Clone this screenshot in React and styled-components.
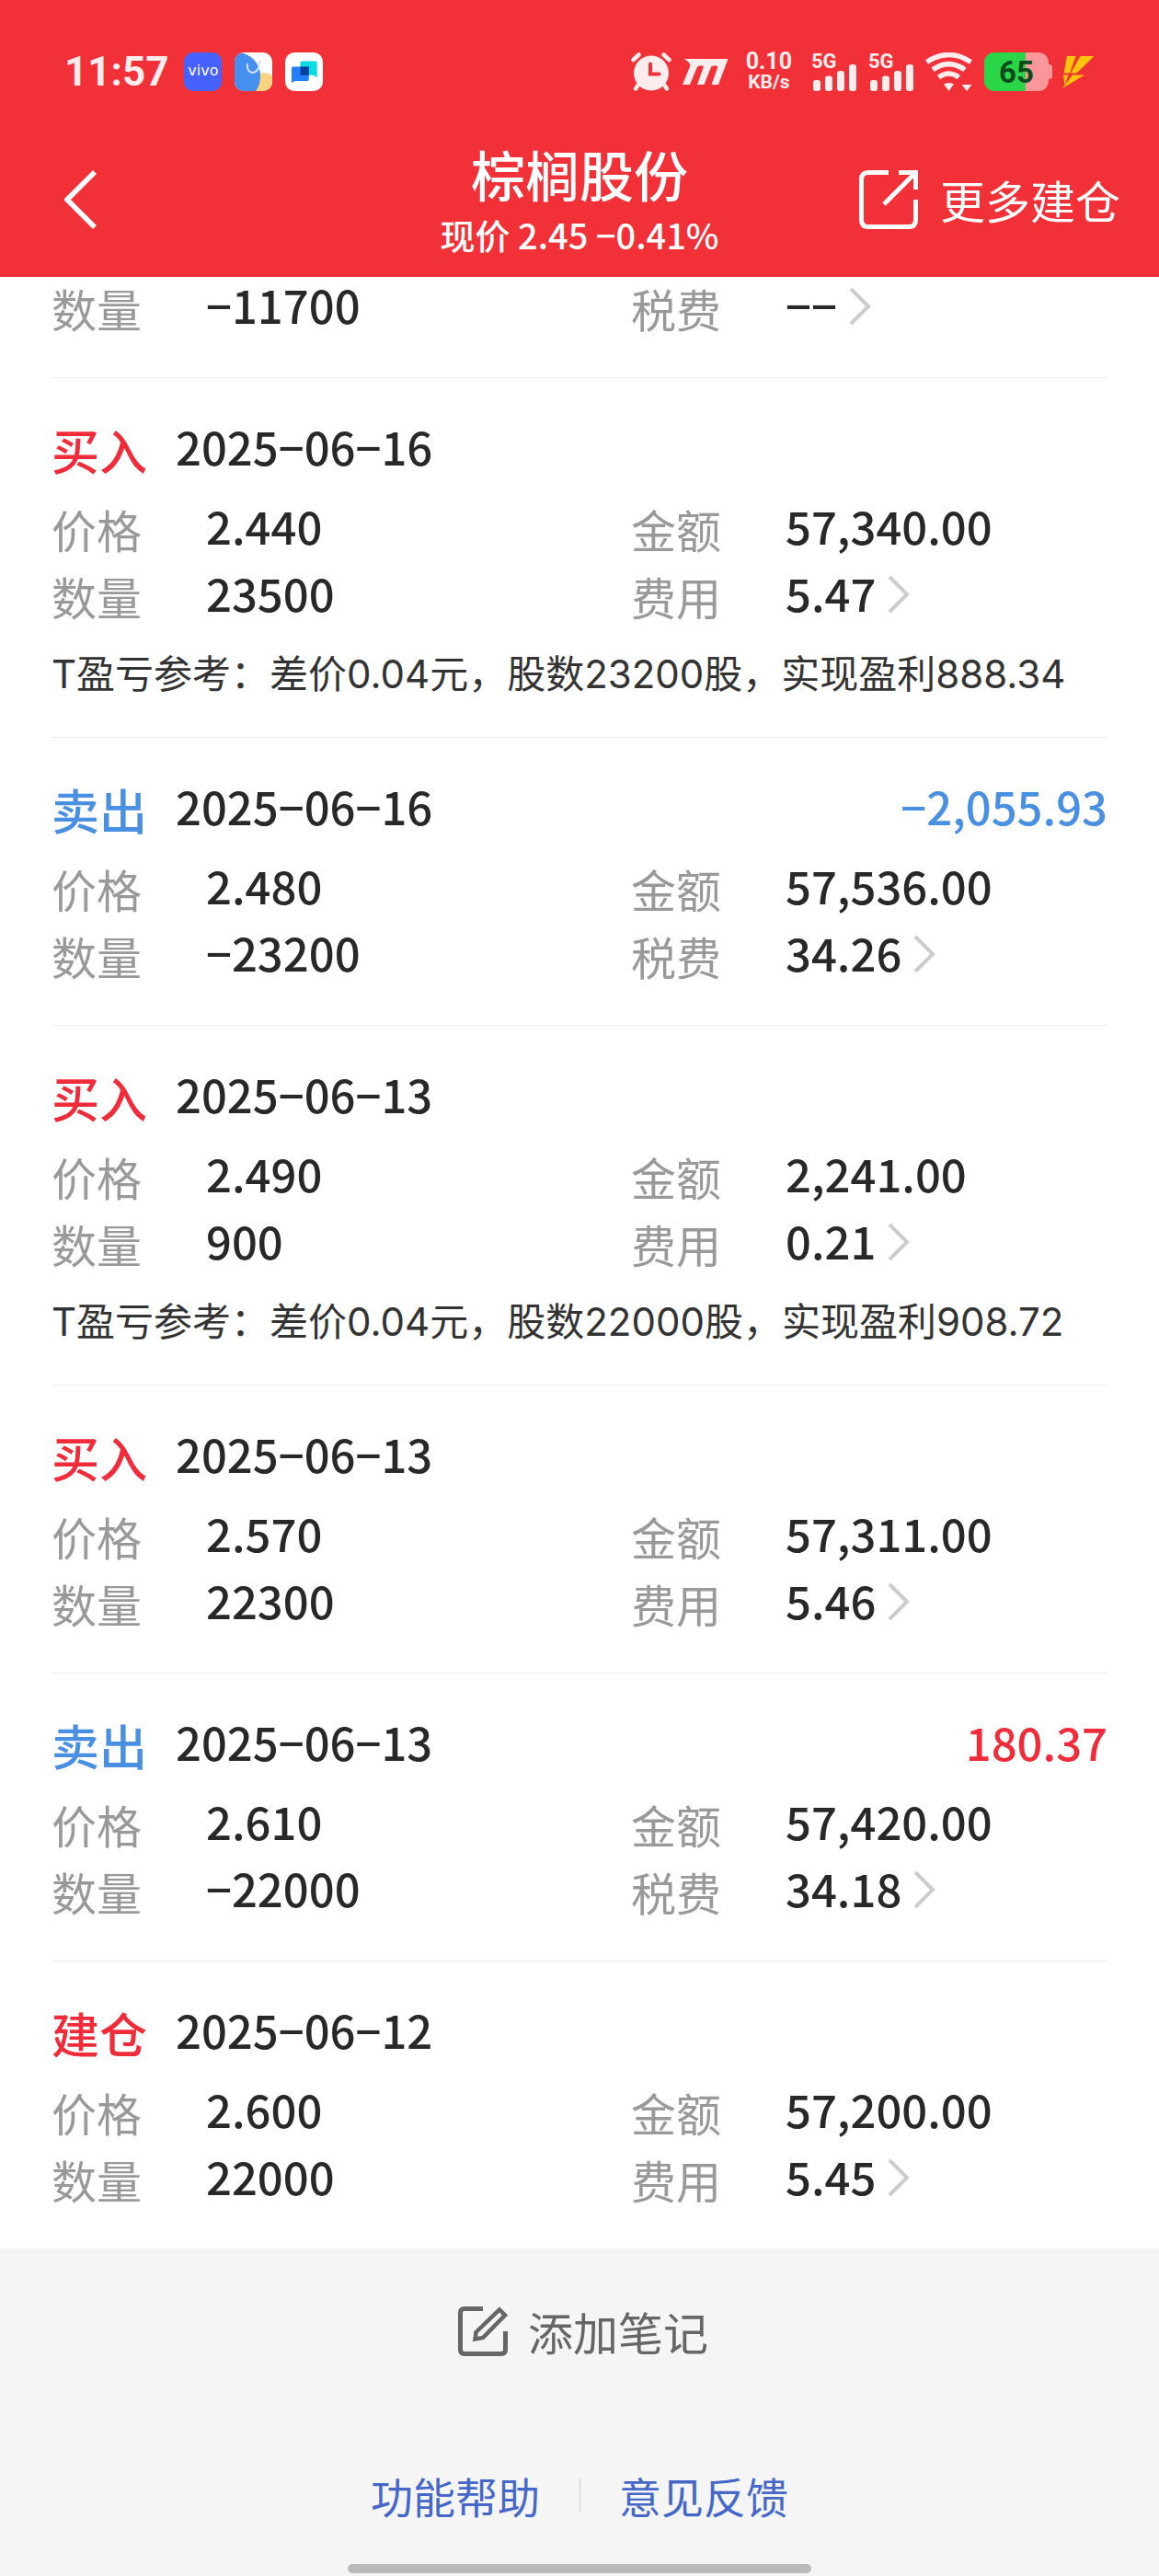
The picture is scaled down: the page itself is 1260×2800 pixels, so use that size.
import React from 'react'
import styled, { createGlobalStyle } from 'styled-components'

const RED = '#f23037'
const BUY = '#f02c3a'
const SELL = '#4a90e2'
const FONT = '"Noto Sans CJK SC", "Noto Sans", sans-serif'

const GlobalStyle = createGlobalStyle`
  * {
    box-sizing: border-box;
  }
  body {
    margin: 0;
    background: #f5f5f5;
    font-family: ${FONT};
    color: #282828;
  }
  h1, p, dl, dd {
    margin: 0;
  }
  button {
    border: 0;
    padding: 0;
    background: none;
    font-family: inherit;
    color: inherit;
    cursor: pointer;
  }
  svg {
    display: block;
    flex: none;
  }
`

const Page = styled.div`
  min-height: 100vh;
  display: flex;
  flex-direction: column;
`

const Header = styled.header`
  background: ${RED};
  color: #fff;
`

const StatusBar = styled.div`
  display: flex;
  align-items: center;
  justify-content: space-between;
  height: 133px;
  padding: 57px 70px 34px;
  color: #ffeced;
  font-family: Roboto, sans-serif;
  font-weight: 700;
`

const StatusGroup = styled.div`
  display: flex;
  align-items: center;
  gap: ${props => props.$gap}px;
`

const Clock = styled.time`
  margin-right: 3px;
  font-size: 44px;
  line-height: 44px;
`

const VivoIcon = styled.span`
  width: 41px;
  height: 42px;
  border-radius: 10px;
  background: #4561ff;
  color: #fff;
  font: 16px/40px 'DejaVu Sans', sans-serif;
  text-align: center;
`

const Speed = styled.div`
  margin: 0 9px 0 7px;
  text-align: center;
  line-height: 23px;
`

const SpeedValue = styled.div`
  font-size: 25px;
`

const SpeedUnit = styled.div`
  font-size: 21px;
`

const Signal = styled.div`
  display: grid;
  height: 42px;

  & > * {
    grid-area: 1 / 1;
  }
`

const SignalLabel = styled.span`
  font-size: 22px;
  line-height: 20px;
`

const Battery = styled.div`
  position: relative;
  width: 70px;
  height: 42px;
  margin-right: 3px;
  border-radius: 11px;
  background: linear-gradient(to right, #2bd548 64%, #f9979b 64%);
  color: #0b4a1c;
  font-size: 33px;
  line-height: 43px;
  text-align: center;

  &::after {
    content: '';
    position: absolute;
    left: 70px;
    top: 13px;
    width: 4px;
    height: 16px;
    border-radius: 0 3px 3px 0;
    background: #f9979b;
  }
`

const NavBar = styled.div`
  display: grid;
  grid-template-columns: 1fr auto 1fr;
  align-items: center;
  height: 168px;
  padding: 0 42px;
`

const BackButton = styled.button`
  justify-self: start;
  margin-left: 28px;
`

const TitleBlock = styled.div`
  padding-top: 4px;
  text-align: center;
`

const Title = styled.h1`
  font-size: 59px;
  line-height: 72px;
  font-weight: 500;
`

const Quote = styled.p`
  font-size: 38px;
  line-height: 60px;
  font-weight: 500;
`

const MoreButton = styled.button`
  justify-self: end;
  display: flex;
  align-items: center;
  gap: 24px;
  font-size: 49px;
  line-height: 56px;
`

const List = styled.main`
  background: #fff;
  padding-top: 2px;
`

const Record = styled.section`
  &:not(:last-child)::after {
    content: '';
    display: block;
    height: 1px;
    margin: 0 56px;
    background: #ececec;
  }
`

const RecordHead = styled.div`
  display: flex;
  align-items: center;
  height: 56px;
  margin: 46px 56px 30px;
`

const Action = styled.span`
  width: 135px;
  padding-top: 8px;
  font-size: 52px;
  line-height: 56px;
  font-weight: 500;
  color: ${props => props.$color};
`

const Amount = styled.span`
  font-size: 49px;
  line-height: 56px;
  font-weight: 500;
`

const Profit = styled(Amount)`
  margin-left: auto;
  color: ${props => props.$color};
`

const Fields = styled.dl`
  display: grid;
  grid-template-columns: 1fr 1fr;
  row-gap: 17px;
  padding-bottom: 51px;
`

const Field = styled.div`
  display: flex;
  align-items: center;
  height: 56px;
  padding-left: 56px;
`

const Label = styled.dt`
  width: 168px;
  padding-top: 8px;
  font-size: 49px;
  line-height: 56px;
  color: #999;
`

const Value = styled.dd`
  font-size: 49px;
  line-height: 56px;
  font-weight: 500;
`

const FeeButton = styled.button`
  display: flex;
  align-items: center;
  gap: 13px;
  font-size: inherit;
  font-weight: inherit;
  line-height: inherit;

  svg {
    margin-top: 4px;
  }
`

const Note = styled.p`
  margin: -18px 56px 0;
  padding-bottom: 40px;
  font: 400 42px/56px Inter, ${FONT};
  color: #333;
`

const Footer = styled.footer`
  display: flex;
  flex-direction: column;
  align-items: center;
  flex: 1;
  padding: 60px 0 3px;
`

const AddNote = styled.button`
  display: flex;
  align-items: center;
  gap: 22px;
  padding-left: 8px;
  font-size: 49px;
  line-height: 60px;
  color: #666;
`

const Links = styled.nav`
  display: flex;
  align-items: center;
  margin-top: 118px;
`

const FooterLink = styled.a`
  padding: 0 43px;
  font-size: 46px;
  line-height: 60px;
  color: #4568c8;
  text-decoration: none;

  & + & {
    background: linear-gradient(#ccc, #ccc) left center / 1px 36px no-repeat;
  }
`

const HomeBar = styled.div`
  width: 40%;
  height: 10px;
  margin-top: auto;
  border-radius: 5px;
  background: #bababa;
`

const records = [
  { quantity: '−11700', fee: '−−' },
  {
    action: '买入',
    date: '2025−06−16',
    price: '2.440',
    total: '57,340.00',
    quantity: '23500',
    fee: '5.47',
    note: 'T盈亏参考：差价0.04元，股数23200股，实现盈利888.34',
  },
  {
    action: '卖出',
    date: '2025−06−16',
    profit: '−2,055.93',
    price: '2.480',
    total: '57,536.00',
    quantity: '−23200',
    fee: '34.26',
  },
  {
    action: '买入',
    date: '2025−06−13',
    price: '2.490',
    total: '2,241.00',
    quantity: '900',
    fee: '0.21',
    note: 'T盈亏参考：差价0.04元，股数22000股，实现盈利908.72',
  },
  {
    action: '买入',
    date: '2025−06−13',
    price: '2.570',
    total: '57,311.00',
    quantity: '22300',
    fee: '5.46',
  },
  {
    action: '卖出',
    date: '2025−06−13',
    profit: '180.37',
    price: '2.610',
    total: '57,420.00',
    quantity: '−22000',
    fee: '34.18',
  },
  {
    action: '建仓',
    date: '2025−06−12',
    price: '2.600',
    total: '57,200.00',
    quantity: '22000',
    fee: '5.45',
  },
]

const BrowserIcon = () => (
  <svg width="41" height="42" viewBox="0 0 41 42">
    <defs>
      <clipPath id="tile">
        <rect width="41" height="42" rx="10" />
      </clipPath>
    </defs>
    <g clipPath="url(#tile)">
      <rect width="41" height="42" fill="#fff" />
      <circle cx="32" cy="35" r="13" fill="#fbd380" />
      <path d="M0 1H10C20 4 28 14 28 25C28 32 26 38 23 42H0Z" fill="#4590ee" />
      <path d="M14 12C12 25 26 25 27 13" fill="none" stroke="#d3e7ff" strokeWidth="2" />
      <circle cx="27" cy="11" r="1.2" fill="none" stroke="#b9c6d8" strokeWidth="0.8" />
    </g>
  </svg>
)

const MessageIcon = () => (
  <svg width="41" height="42" viewBox="0 0 41 42">
    <rect width="41" height="42" rx="10" fill="#fff" />
    <path d="M18 9.500H33Q34.700 9.500 34.700 11V27L30 24.700H16.500V11Q16.500 9.500 18 9.500Z" fill="#0cdbe2" />
    <path d="M8.500 15.500H25.800V29.500Q25.800 31 24 31H11L7 33V17Q7 15.500 8.500 15.500Z" fill="#2280ff" />
    <path d="M16.500 15.500H25.800V24.700H16.500Z" fill="#00409b" />
  </svg>
)

const AlarmIcon = () => (
  <svg width="44" height="42" viewBox="0 0 44 42">
    <g stroke="currentColor" strokeWidth="4.500" strokeLinecap="round" fill="none">
      <path d="M2.500 8L8.500 2.500M35.500 2.500L41.500 8" />
      <path d="M8 35L5 39.500M36 35L39 39.500" />
    </g>
    <circle cx="22" cy="22.5" r="19" fill="currentColor" />
    <path d="M21 12.500V23.500H30.500" fill="none" stroke={RED} strokeWidth="4" strokeLinecap="round" />
  </svg>
)

const MotionIcon = () => (
  <svg width="50" height="28" viewBox="0 0 50 28">
    <path
      d="M2 0H49.500L39 28H31.500L38 9.500Q38.700 7.500 36.500 7.500H33.500Q31.500 7.500 30.800 9.500L23.500 28H16L22.500 9.500Q23.200 7.500 21 7.500H18.500Q16.500 7.500 15.700 9.500L8 28H0L8.500 7Q8 4 2 0Z"
      fill="currentColor"
    />
  </svg>
)

const SignalIcon = () => (
  <Signal>
    <SignalLabel>5G</SignalLabel>
    <svg width="50" height="42" viewBox="0 0 50 42" fill="currentColor">
      <rect x="2" y="30" width="8" height="12" rx="3" />
      <rect x="15" y="25.500" width="8" height="16.500" rx="3" />
      <rect x="28" y="20" width="8" height="22" rx="3" />
      <rect x="41" y="13" width="8" height="29" rx="3" />
    </svg>
  </Signal>
)

const WifiIcon = () => (
  <svg width="52" height="42" viewBox="0 0 52 42">
    <g fill="none" stroke="currentColor" strokeWidth="5.500">
      <path d="M1.500 10.500Q25.500 -5.500 49.500 10.500" />
      <path d="M8 18.800Q25.500 6.500 43 18.800" />
      <path d="M14.500 27Q25.500 19 36.500 27" />
    </g>
    <path d="M20 34.500Q25.500 31.500 31 34.500L25.500 42ZM39.500 35H50.500L45 42Z" fill="currentColor" />
  </svg>
)

const BoltIcon = () => (
  <svg width="35" height="35" viewBox="0 0 35 35" fill="#fdc50d">
    <path d="M5 0H14.500L8 18.500H1.500Z" />
    <path d="M19.500 0H34.500L15.500 18.500H9Z" />
    <path d="M1 20.500H6.500L2.500 32ZM11 20.500H24L0 35Z" />
  </svg>
)

const BackIcon = () => (
  <svg width="36" height="64" viewBox="0 0 36 64">
    <path d="M33 2L3 32L33 62" fill="none" stroke="currentColor" strokeWidth="5.500" />
  </svg>
)

const ExportIcon = () => (
  <svg width="64" height="64" viewBox="0 0 64 64" fill="none" stroke="currentColor" strokeWidth="5">
    <path d="M32 2.500H10Q2.500 2.500 2.500 10V54Q2.500 61.500 10 61.500H54Q61.500 61.500 61.500 54V32" />
    <path d="M43 2.500H61.500V21M61.500 2.500L27 37" />
  </svg>
)

const NoteIcon = () => (
  <svg width="54" height="54" viewBox="0 0 54 54" fill="none" stroke="currentColor" strokeWidth="5">
    <path d="M27 2.500H7Q2.500 2.500 2.500 7V47Q2.500 51.500 7 51.500H47Q51.500 51.500 51.500 47V27" />
    <path d="M45 3.500L51 9.500L27 34L18.500 35.500L19.500 28Z" strokeWidth="4.500" />
  </svg>
)

const ChevronIcon = () => (
  <svg width="24" height="42" viewBox="0 0 24 42">
    <path d="M2 2L21 21L2 40" fill="none" stroke="#ccc" strokeWidth="4" />
  </svg>
)

const TradeRecord = ({ record }) => {
  const sold = record.action === '卖出' || !record.action
  return (
    <Record>
      {record.action && (
        <RecordHead>
          <Action $color={sold ? SELL : BUY}>{record.action}</Action>
          <Amount as="time">{record.date}</Amount>
          {record.profit && (
            <Profit $color={record.profit.startsWith('−') ? SELL : BUY}>{record.profit}</Profit>
          )}
        </RecordHead>
      )}
      <Fields>
        {record.price && (
          <>
            <Field>
              <Label>价格</Label>
              <Value>{record.price}</Value>
            </Field>
            <Field>
              <Label>金额</Label>
              <Value>{record.total}</Value>
            </Field>
          </>
        )}
        <Field>
          <Label>数量</Label>
          <Value>{record.quantity}</Value>
        </Field>
        <Field>
          <Label>{sold ? '税费' : '费用'}</Label>
          <Value>
            <FeeButton type="button">
              {record.fee}
              <ChevronIcon />
            </FeeButton>
          </Value>
        </Field>
      </Fields>
      {record.note && <Note>{record.note}</Note>}
    </Record>
  )
}

const App = () => (
  <Page>
    <GlobalStyle />
    <Header>
      <StatusBar>
        <StatusGroup $gap={14}>
          <Clock>11:57</Clock>
          <VivoIcon>vivo</VivoIcon>
          <BrowserIcon />
          <MessageIcon />
        </StatusGroup>
        <StatusGroup $gap={12}>
          <AlarmIcon />
          <MotionIcon />
          <Speed>
            <SpeedValue>0.10</SpeedValue>
            <SpeedUnit>KB/s</SpeedUnit>
          </Speed>
          <SignalIcon />
          <SignalIcon />
          <WifiIcon />
          <Battery>65</Battery>
          <BoltIcon />
        </StatusGroup>
      </StatusBar>
      <NavBar>
        <BackButton type="button" aria-label="返回">
          <BackIcon />
        </BackButton>
        <TitleBlock>
          <Title>棕榈股份</Title>
          <Quote>现价 2.45 −0.41%</Quote>
        </TitleBlock>
        <MoreButton type="button">
          <ExportIcon />
          更多建仓
        </MoreButton>
      </NavBar>
    </Header>
    <List>
      {records.map((record, i) => (
        <TradeRecord key={i} record={record} />
      ))}
    </List>
    <Footer>
      <AddNote type="button">
        <NoteIcon />
        添加笔记
      </AddNote>
      <Links>
        <FooterLink href="#help">功能帮助</FooterLink>
        <FooterLink href="#feedback">意见反馈</FooterLink>
      </Links>
      <HomeBar />
    </Footer>
  </Page>
)

export default App
